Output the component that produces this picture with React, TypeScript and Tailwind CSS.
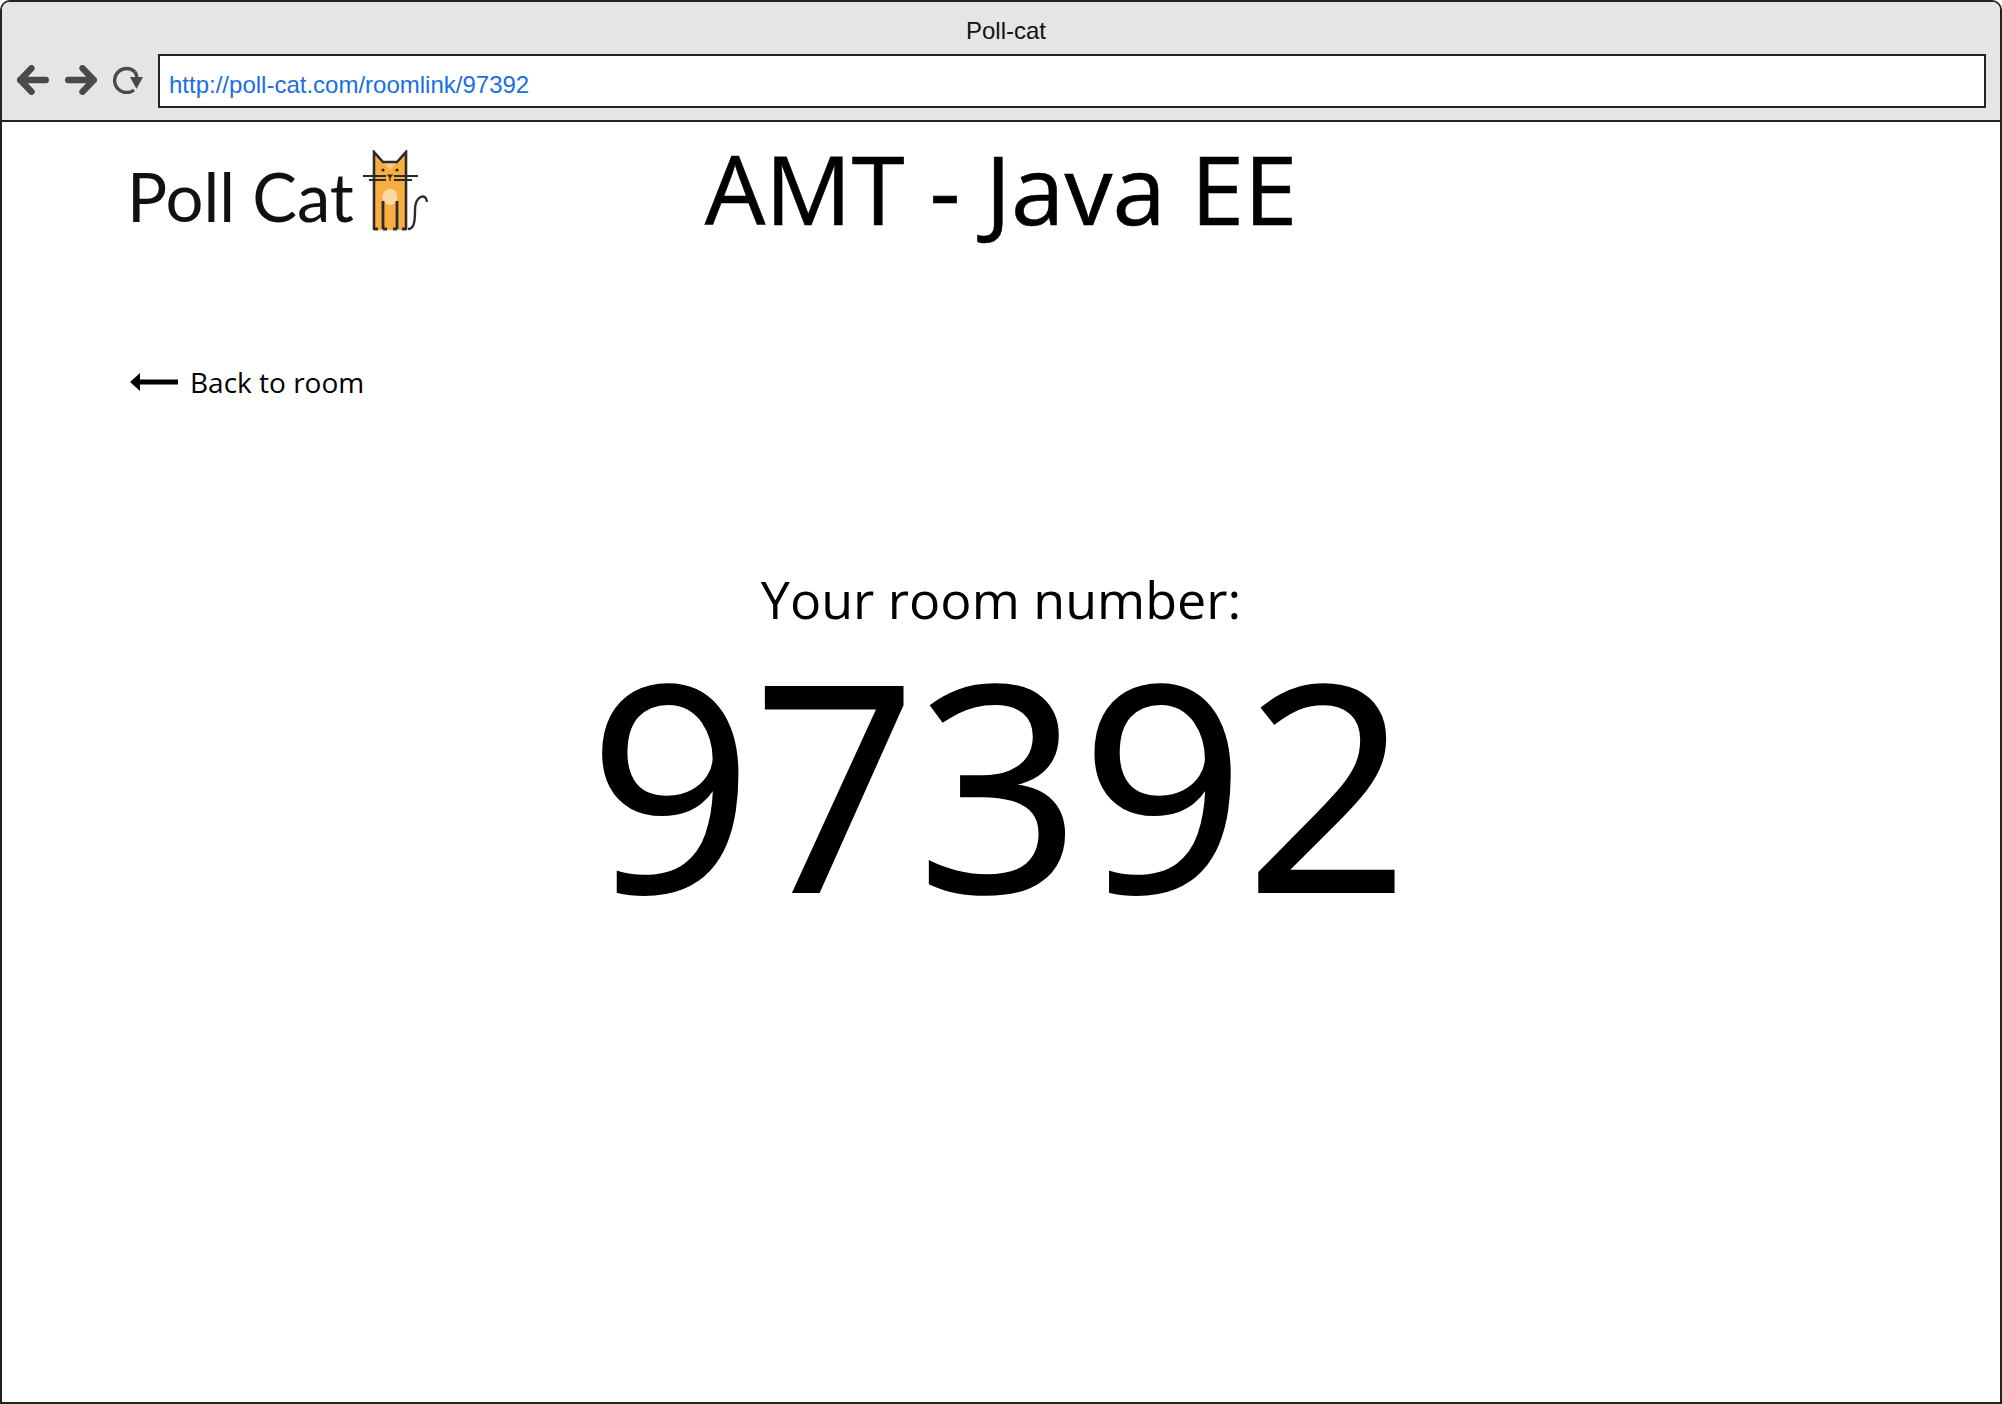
import React from "react";

function CatLogo() {
  return (
    <svg width="68" height="82" viewBox="0 0 68 82" className="block">
      <path d="M12 2 L12 80 L44 80 L44 2 L35 12 L21 12 Z" fill="#f9ae42" />
      <path d="M21 12 L35 12 L28 20 Z" fill="#fbc987" />
      <ellipse cx="28" cy="47" rx="7.5" ry="8" fill="#fcd8a6" />
      <path d="M12 80 L12 2 L21 12 L35 12 L44 2 L44 80" fill="none" stroke="#2b2b2b" strokeWidth="2.6" />
      <path d="M1 26 L24 26 M32 26 L56 26 M7 30 L24 30 M32 30 L50 30" stroke="#2b2b2b" strokeWidth="2.2" fill="none" />
      <circle cx="21" cy="20" r="1.6" fill="#2b2b2b" />
      <circle cx="35" cy="20" r="1.6" fill="#2b2b2b" />
      <path d="M26 25 L30 25 L28 27.5 Z M28 26 L28 31" fill="#2b2b2b" stroke="#2b2b2b" strokeWidth="1.2" />
      <path d="M21 51 L21 79 M35 51 L35 79 M12 79 L16 79 M21 79 L25 79 M31 79 L35 79 M40 79 L44 79" fill="none" stroke="#2b2b2b" strokeWidth="2.8" />
      <path d="M46 79 C52 79 53 72 53 60 C53 46 64 42 65 52" fill="none" stroke="#2b2b2b" strokeWidth="2.4" />
    </svg>
  );
}

function BackIcon() {
  return (
    <svg width="48" height="20" viewBox="0 0 48 20" className="block">
      <path d="M0 10 L10 1 L10 7.5 L48 7.5 L48 12.5 L10 12.5 L10 19 Z" fill="#000" />
    </svg>
  );
}

function Nav({ flip }: { flip?: boolean }) {
  return (
    <svg width="32" height="30" viewBox="0 0 32 30" className={`block ${flip ? "-scale-x-100" : ""}`}>
      <path d="M14.5 3.2 L3.2 15 L14.5 26.8 M3.2 15 L28.8 15" fill="none" stroke="#4a4a4a" strokeWidth="6.4" strokeLinecap="round" strokeLinejoin="round" />
    </svg>
  );
}

function Reload() {
  return (
    <svg width="30" height="28" viewBox="0 0 30 28" className="block">
      <path d="M22 6 A12 12 0 1 0 21 24" fill="none" stroke="#4a4a4a" strokeWidth="3.4" />
      <path d="M22 6 C23 7.5 23.5 9 24 11" fill="none" stroke="#4a4a4a" strokeWidth="3.4" />
      <path d="M17 11 L30 11 L23.5 23 Z" fill="#4a4a4a" />
    </svg>
  );
}

export default function App() {
  return (
    <div className="w-[2002px] h-[1404px] bg-white border-2 border-[#222] rounded-t-[10px] overflow-hidden flex flex-col font-['Open_Sans',sans-serif] text-black">
      <div className="h-[120px] shrink-0 bg-[#e5e5e5] border-b-2 border-[#222] flex flex-col">
        <div className="h-[52px] pt-[13px] pl-[10px] text-center text-[24px] leading-[32px] font-['Liberation_Sans',sans-serif] text-[#111]">
          Poll-cat
        </div>
        <div className="flex items-center pl-[15px] pr-[14px] h-[54px]">
          <div className="flex items-center gap-[16px] w-[141px] -mt-[2px]">
            <Nav />
            <Nav flip />
            <Reload />
          </div>
          <div className="flex-1 h-[54px] bg-white border-2 border-[#222] pl-[9px] flex items-center">
            <span className="font-['Liberation_Sans',sans-serif] text-[24px] text-[#1a6fe0] pt-[8px]">
              http://poll-cat.com/roomlink/97392
            </span>
          </div>
        </div>
      </div>

      <div className="flex-1 flex flex-col">
        <div className="grid grid-cols-[1fr_auto_1fr] items-start h-[190px]">
          <div className="flex items-start pl-[125px] pt-[34px]">
            <span className="font-['Lato',sans-serif] font-normal text-[67px] leading-[80px] text-[#111] w-[235px] whitespace-nowrap">
              Poll Cat
            </span>
            <div className="-mt-[6px]">
              <CatLogo />
            </div>
          </div>
          <h1 className="text-[96px] leading-[110px] pt-[11px] font-normal whitespace-nowrap [-webkit-text-stroke:0.6px_#000]">AMT - Java EE</h1>
          <div />
        </div>

        <div className="flex items-center gap-[12px] pl-[128px] mt-[50px] h-[40px]">
          <BackIcon />
          <span className="text-[28px] leading-[42px]">Back to room</span>
        </div>

        <div className="flex flex-col items-center mt-[160px]">
          <div className="text-[52px] leading-[74px]">Your room number:</div>
          <div className="text-[287px] leading-[340px] -mt-[25px] -ml-[4px] [-webkit-text-stroke:2px_#000]">97392</div>
        </div>
      </div>
    </div>
  );
}
